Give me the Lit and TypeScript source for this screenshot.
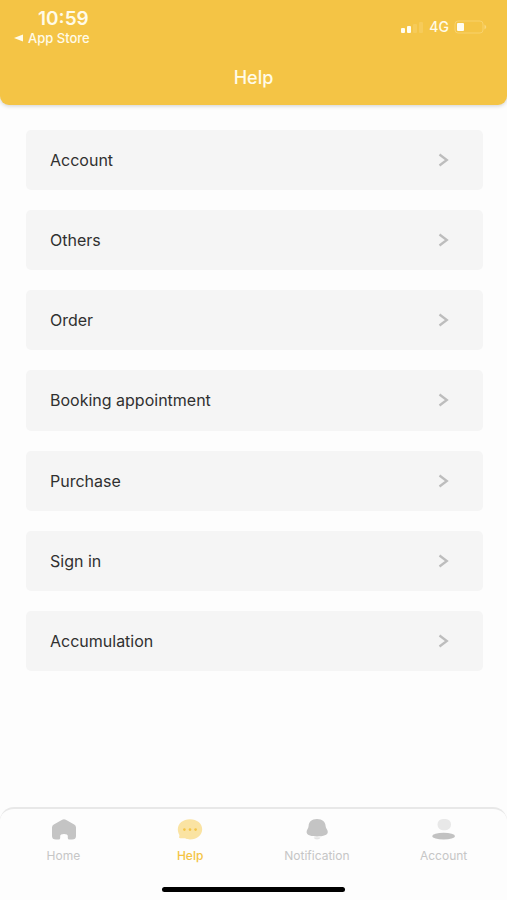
import { LitElement, html, svg, css } from "lit";
import { customElement, state } from "lit/decorators.js";
import { classMap } from "lit/directives/class-map.js";

const topics = [
  "Account",
  "Others",
  "Order",
  "Booking appointment",
  "Purchase",
  "Sign in",
  "Accumulation",
];

const tabs = [
  {
    label: "Home",
    icon: svg`<path fill="#c4c4c4" d="M12.200 .8Q14 -.4 15.800 .8L24.200 5.400Q26 6.400 26 8.400V17Q26 20.600 22 20.600H19.400Q17.800 20.600 17.800 19V17Q17.800 15 14 15T10.200 17V19Q10.200 20.600 8.600 20.600H6Q2 20.600 2 17V8.400Q2 6.400 3.800 5.400Z"/>`,
  },
  {
    label: "Help",
    icon: svg`<path fill="#fae3a2" d="M13 .2C20 .2 25.200 4.400 25.200 10.200S20 20.400 13 20.400C11 20.400 9.600 20 8 19.200C6 19.200 4.200 19.400 2.400 19C1.600 18.600 2.600 17.400 2.400 16C1.400 14.400 .8 12.400 .8 10.200C.8 4.400 6 .2 13 .2Z"/>
      <g fill="#f4c445"><circle cx="7.400" cy="10.600" r="1.300"/><circle cx="13" cy="10.600" r="1.300"/><circle cx="18.600" cy="10.600" r="1.300"/></g>`,
  },
  {
    label: "Notification",
    icon: svg`<path fill="#c4c4c4" d="M13 0C18.600 0 21.400 3.200 21.600 7C21.600 9.400 23.800 10.400 23.800 13C23.800 16 19.600 17.400 13 17.400S2.600 16 2.600 13C2.600 10.400 4.600 9.400 4.600 7C4.800 3.200 7.400 0 13 0Z"/>
      <path fill="#e4e4e4" d="M9.600 18.600Q13 18 16.600 18.600Q15.600 20.600 13 20.600T9.600 18.600Z"/>`,
  },
  {
    label: "Account",
    icon: svg`<rect fill="#e8e8e8" x="6.500" y="0" width="13.500" height="11.200" rx="5.400"/>
      <ellipse fill="#c2c2c2" cx="12.600" cy="17.200" rx="11.400" ry="3.400"/>`,
  },
];

@customElement("app-root")
export class AppRoot extends LitElement {
  static styles = css`
    :host {
      display: flex;
      flex-direction: column;
      min-height: 100vh;
      box-sizing: border-box;
      background: #fdfdfd;
      color: #303030;
      font-family: Inter, "Liberation Sans", sans-serif;
    }
    button {
      margin: 0;
      border: 0;
      padding: 0;
      background: none;
      color: inherit;
      font: inherit;
      cursor: pointer;
    }
    svg {
      display: block;
    }
    .header {
      background: #f4c445;
      color: #fffbe8;
      border-radius: 0 0 9px 9px;
      box-shadow: 0 1px 4px rgb(0 0 0 / 18%);
      padding-bottom: 16px;
    }
    .status {
      display: flex;
      justify-content: space-between;
      align-items: center;
      padding: 8px 20px 0 14px;
    }
    .time {
      font-size: 19px;
      line-height: 22px;
      font-weight: 600;
      padding-left: 24px;
    }
    .back {
      display: flex;
      align-items: center;
      gap: 5px;
      font-size: 13px;
      line-height: 16px;
      font-weight: 500;
    }
    .signals {
      display: flex;
      align-items: center;
      gap: 5px;
      font-size: 14px;
      line-height: 16px;
      font-weight: 500;
    }
    .title {
      margin: 0;
      padding-top: 21px;
      text-align: center;
      font-size: 18px;
      line-height: 22px;
      font-weight: 500;
    }
    .topics {
      flex: 1;
      display: grid;
      grid-auto-rows: 1fr;
      gap: 20px;
      margin: 0;
      padding: 25px 24px 136px 26px;
      list-style: none;
    }
    .topic {
      display: flex;
      align-items: center;
      justify-content: space-between;
      width: 100%;
      height: 100%;
      min-height: 56px;
      padding: 0 34px 0 24px;
      border-radius: 5px;
      background: #f5f5f5;
      font-size: 16px;
      line-height: 20px;
      text-align: left;
    }
    .nav {
      border-top: 2px solid #e8e8e8;
      border-radius: 14px 14px 0 0;
      padding: 10px 0 8px;
    }
    .tabs {
      display: grid;
      grid-template-columns: repeat(4, 1fr);
    }
    .tab {
      display: flex;
      flex-direction: column;
      align-items: center;
      gap: 8px;
      color: #c6c6c6;
      font-size: 12px;
      line-height: 16px;
    }
    .tab.active {
      color: #f4c445;
      font-weight: 500;
    }
    .indicator {
      width: 36%;
      height: 5px;
      margin: 23px auto 0;
      border-radius: 3px;
      background: #000;
    }
  `;

  @state() private current = "Help";

  render() {
    return html`
      <header class="header">
        <div class="status">
          <div>
            <div class="time">10:59</div>
            <button class="back">
              <svg width="9" height="8" viewBox="0 0 9 8" aria-hidden="true">
                <path d="M0 4L9 .5V7.500Z" fill="currentColor" />
              </svg>
              App Store
            </button>
          </div>
          <div class="signals">
            <svg width="23" height="13" viewBox="0 0 23 13" aria-hidden="true">
              <g fill="#fffdf2">
                <rect x="0" y="7" width="4" height="5" rx="1" />
                <rect x="6" y="5" width="4" height="7" rx="1" />
              </g>
              <g fill="#f6cb5a">
                <rect x="12" y="3" width="4" height="9" rx="1" />
                <rect x="18" y="1" width="4" height="11" rx="1" />
              </g>
            </svg>
            4G
            <svg width="33" height="14" viewBox="0 0 33 14" aria-hidden="true">
              <rect x="1" y="1" width="28" height="12" rx="3" fill="none" stroke="#f8d26c" />
              <rect x="3" y="3" width="7" height="8" rx="1" fill="#fffdf2" />
              <path d="M30.500 4.500Q34 7 30.500 9.500Z" fill="#f9d87e" />
            </svg>
          </div>
        </div>
        <h1 class="title">Help</h1>
      </header>

      <ul class="topics">
        ${topics.map(
          (topic) => html`<li>
            <button class="topic">
              ${topic}
              <svg width="11" height="14" viewBox="0 0 11 14" aria-hidden="true">
                <path d="M1.500 1.500L8.800 7L1.500 12.500" fill="none" stroke="#bdbdbd" stroke-width="2.300" />
              </svg>
            </button>
          </li>`
        )}
      </ul>

      <nav class="nav">
        <div class="tabs">
          ${tabs.map(
            (tab) => html`<button
              class=${classMap({ tab: true, active: tab.label === this.current })}
              @click=${() => (this.current = tab.label)}
            >
              <svg width="26" height="21" viewBox="0 0 26 21" aria-hidden="true">${tab.icon}</svg>
              ${tab.label}
            </button>`
          )}
        </div>
        <div class="indicator"></div>
      </nav>
    `;
  }
}
